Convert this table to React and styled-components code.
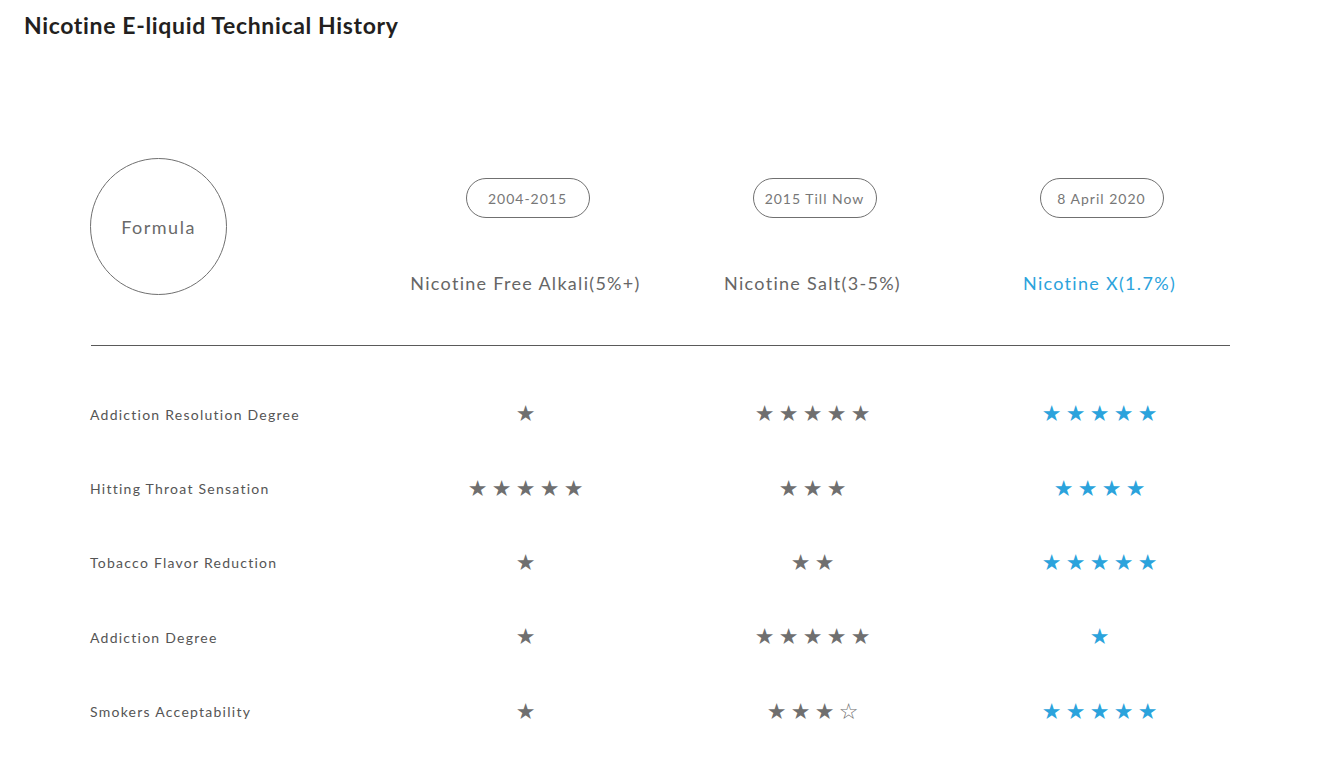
import React from "react";
import styled, { createGlobalStyle } from "styled-components";

const Global = createGlobalStyle`
  html, body { margin: 0; padding: 0; background: #fff; }
  body { font-family: "Lato", "Open Sans", sans-serif; }
`;

const Page = styled.div`
  width: 1329px;
  min-height: 757px;
  box-sizing: border-box;
  padding: 11px 0 0 24px;
`;

const Title = styled.h1`
  margin: 0;
  font-family: "Lato", sans-serif;
  font-weight: 700;
  font-size: 23px;
  line-height: 28px;
  color: #231f20;
  letter-spacing: 0.65px;
`;

const Table = styled.div`
  margin: 119px 0 0 66px;
`;

const Grid = styled.div`
  display: grid;
  grid-template-columns: 292px repeat(3, 287px);
  align-items: center;
`;

const Circle = styled.div`
  width: 135px;
  height: 135px;
  border: 1px solid #707070;
  border-radius: 50%;
  display: flex;
  align-items: center;
  justify-content: center;
  font-size: 18px;
  letter-spacing: 1.5px;
  color: #6a6a6a;
`;

const HeadCell = styled.div`
  align-self: stretch;
  display: flex;
  flex-direction: column;
  align-items: center;
  padding-top: 20px;
`;

const Pill = styled.div`
  width: 122px;
  height: 38px;
  margin-left: 4px;
  border: 1px solid #707070;
  border-radius: 20px;
  display: flex;
  align-items: center;
  justify-content: center;
  font-size: 14px;
  letter-spacing: 1px;
  color: #777;
`;

const Name = styled.div`
  margin-top: 55px;
  font-size: 18px;
  line-height: 20px;
  letter-spacing: 1.3px;
  color: ${(p) => (p.$accent ? "#2ba3dc" : "#666")};
`;

const Rule = styled.div`
  width: 1139px;
  margin: 50px 0 31px 1px;
  border-top: 1px solid #5a5a5a;
`;

const Row = styled(Grid)`
  height: 74.4px;
`;

const Label = styled.div`
  font-size: 14px;
  letter-spacing: 1.25px;
  color: #555;
`;

const Stars = styled.div`
  display: flex;
  justify-content: center;
`;

const Star = styled.span`
  width: 24px;
  text-align: center;
  font-family: "DejaVu Sans", sans-serif;
  font-size: 22px;
  line-height: 24px;
  color: ${(p) => (p.$accent ? "#2ba3dc" : "#6f6f6f")};
`;

const cols = [
  { date: "2004-2015", name: "Nicotine Free Alkali(5%+)" },
  { date: "2015 Till Now", name: "Nicotine Salt(3-5%)" },
  { date: "8 April 2020", name: "Nicotine X(1.7%)", accent: true },
];

const rows = [
  { label: "Addiction Resolution Degree", v: [[1], [5], [5]] },
  { label: "Hitting Throat Sensation", v: [[5], [3], [4]] },
  { label: "Tobacco Flavor Reduction", v: [[1], [2], [5]] },
  { label: "Addiction Degree", v: [[1], [5], [1]] },
  { label: "Smokers Acceptability", v: [[1], [3, 1], [5]] },
];

function StarGroup({ full, empty = 0, accent }) {
  const items = [];
  for (let i = 0; i < full; i++) items.push(<Star key={"f" + i} $accent={accent}>★</Star>);
  for (let i = 0; i < empty; i++) items.push(<Star key={"e" + i} $accent={accent}>☆</Star>);
  return <Stars>{items}</Stars>;
}

export default function App() {
  return (
    <Page>
      <Global />
      <Title>Nicotine E-liquid Technical History</Title>
      <Table>
        <Grid>
          <Circle>Formula</Circle>
          {cols.map((c) => (
            <HeadCell key={c.date}>
              <Pill>{c.date}</Pill>
              <Name $accent={c.accent}>{c.name}</Name>
            </HeadCell>
          ))}
        </Grid>
        <Rule />
        {rows.map((r) => (
          <Row key={r.label}>
            <Label>{r.label}</Label>
            {r.v.map((s, i) => (
              <StarGroup key={i} full={s[0]} empty={s[1] || 0} accent={cols[i].accent} />
            ))}
          </Row>
        ))}
      </Table>
    </Page>
  );
}
